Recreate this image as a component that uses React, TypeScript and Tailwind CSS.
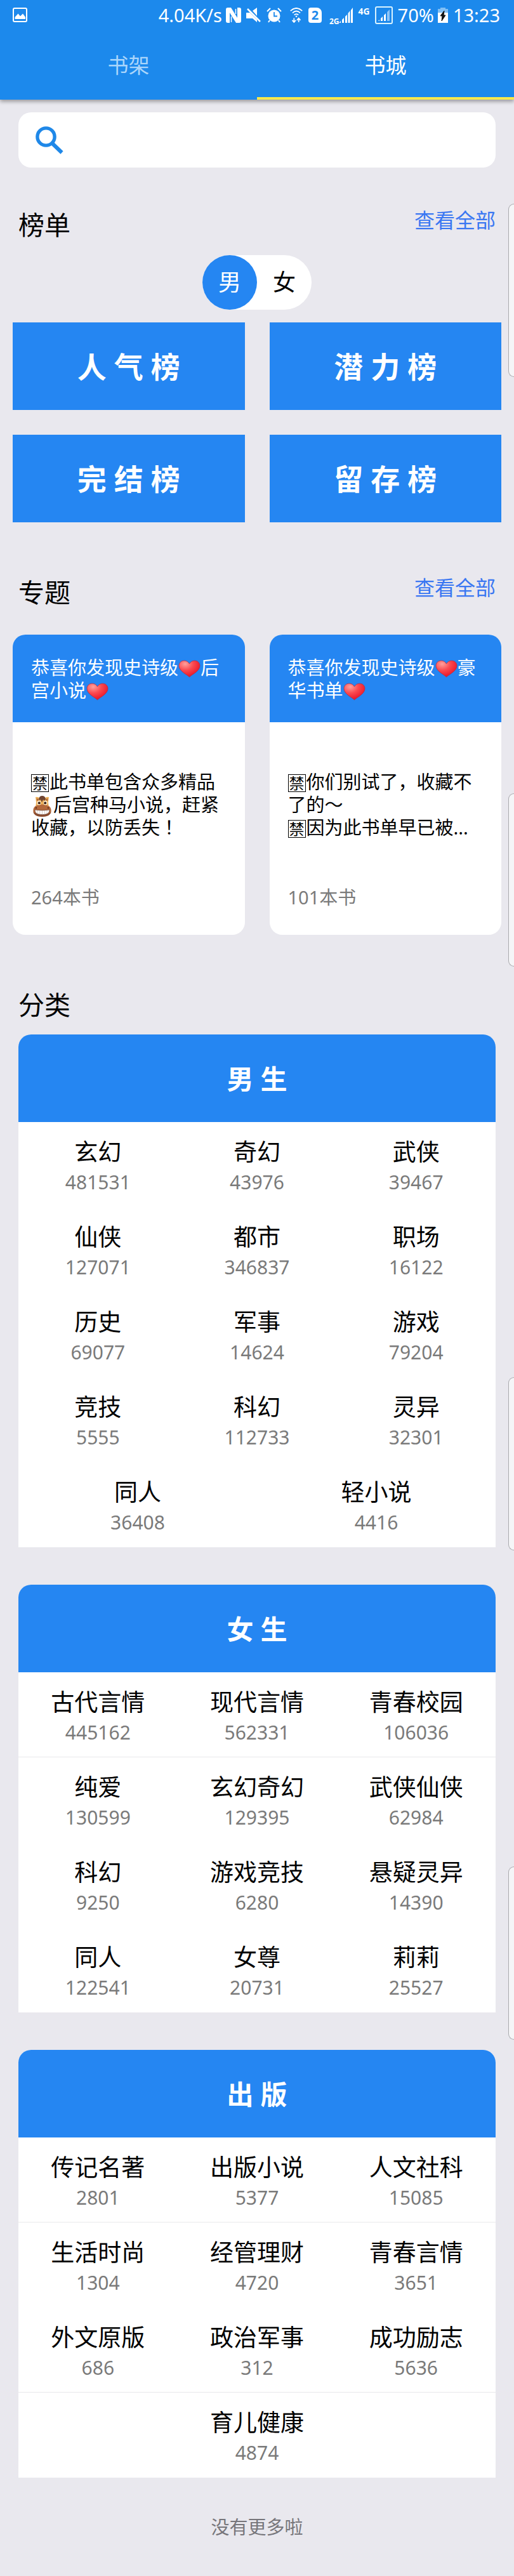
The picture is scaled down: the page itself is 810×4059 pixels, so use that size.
import React from "react";

type Category = { name: string; count: number };
type Group = { title: string; rows: Category[][]; ruled: number[] };

const rankings = ["人 气 榜", "潜 力 榜", "完 结 榜", "留 存 榜"];

const row = (...cells: [string, number][]): Category[] =>
  cells.map(([name, count]) => ({ name, count }));

const groups: Group[] = [
  {
    title: "男 生",
    ruled: [],
    rows: [
      row(["玄幻", 481531], ["奇幻", 43976], ["武侠", 39467]),
      row(["仙侠", 127071], ["都市", 346837], ["职场", 16122]),
      row(["历史", 69077], ["军事", 14624], ["游戏", 79204]),
      row(["竞技", 5555], ["科幻", 112733], ["灵异", 32301]),
      row(["同人", 36408], ["轻小说", 4416]),
    ],
  },
  {
    title: "女 生",
    ruled: [0],
    rows: [
      row(["古代言情", 445162], ["现代言情", 562331], ["青春校园", 106036]),
      row(["纯爱", 130599], ["玄幻奇幻", 129395], ["武侠仙侠", 62984]),
      row(["科幻", 9250], ["游戏竞技", 6280], ["悬疑灵异", 14390]),
      row(["同人", 122541], ["女尊", 20731], ["莉莉", 25527]),
    ],
  },
  {
    title: "出 版",
    ruled: [0, 2],
    rows: [
      row(["传记名著", 2801], ["出版小说", 5377], ["人文社科", 15085]),
      row(["生活时尚", 1304], ["经管理财", 4720], ["青春言情", 3651]),
      row(["外文原版", 686], ["政治军事", 312], ["成功励志", 5636]),
      row(["育儿健康", 4874]),
    ],
  },
];

function Heart() {
  return (
    <svg viewBox="0 0 35 28" className="inline-block h-7 w-[35px] align-[-5px]" aria-hidden="true">
      <defs>
        <radialGradient id="heart" cx="0.3" cy="0.2" r="0.85">
          <stop offset="0" stopColor="#ffa09c" />
          <stop offset="0.45" stopColor="#fb4a50" />
          <stop offset="1" stopColor="#e80d22" />
        </radialGradient>
      </defs>
      <path
        d="M17.500 27C15 23.500 1 18 1 9C1 4.500 4.500 1 9.300 1c3.700 0 6.700 2 8.200 5 1.500-3 4.500-5 8.200-5C30.500 1 34 4.500 34 9c0 9-14 14.500-16.500 18z"
        fill="url(#heart)"
        stroke="#a8324f"
        strokeWidth="0.8"
      />
    </svg>
  );
}

function Horse() {
  return (
    <svg viewBox="0 0 35 36" className="-my-2 inline-block h-9 w-[35px] align-[-2px]" aria-hidden="true">
      <path d="M8 11L7 3q5-1 7 3h7q2-4 7-3l-1 8 1 9H7z" fill="#eeb058" />
      <path d="M9 9L8.500 5q3 0 4 3zM26 9l.5-4q-3 0-4 3z" fill="#b06a38" />
      <path d="M12 6q1-5 5.500-5T23 6l-2 3-2-2-2 4-2-4-2 1z" fill="#6f4432" />
      <path d="M7 17q10.500-5 21 0c3 2 4 5 3.500 9-.7 5-6 7.500-14 7.500S4 31 3.500 26C3 22 4 19 7 17z" fill="#b4693c" />
      <path d="M3.500 26c.7 5 6 8 14 8s13.300-3 14-8c-4 5-24 5-28 0z" fill="#8a4c30" />
      <ellipse cx="12.500" cy="12" rx="3" ry="3.600" fill="#fff0d8" />
      <ellipse cx="22.500" cy="12" rx="3" ry="3.600" fill="#fff0d8" />
      <circle cx="12.800" cy="12.300" r="2" fill="#3b2418" />
      <circle cx="22.200" cy="12.300" r="2" fill="#3b2418" />
      <circle cx="8" cy="20" r="1.300" fill="#6a341f" />
      <circle cx="27" cy="20" r="1.300" fill="#6a341f" />
      <path d="M6 23q11.500 2 23 0c0 5-3 7.500-11.500 7.500S6 28 6 23z" fill="#fff" stroke="#63382a" strokeWidth="0.7" />
      <path d="M10 24v5M13.800 24v6M17.500 24.500v6M21.300 24v6M25 24v5" stroke="#c4b4aa" strokeWidth="0.7" />
    </svg>
  );
}

function Banned() {
  return (
    <span className="mr-px inline-flex h-7 w-7 items-center justify-center border border-black text-2xl leading-none">
      禁
    </span>
  );
}

/* Full-width exclamation mark centred in its cell. */
function Mark({ children }: { children: string }) {
  return (
    <span lang="ko" className="font-['Noto_Sans_CJK_KR',sans-serif] leading-none">
      {children}
    </span>
  );
}

function StatusBar() {
  return (
    <div className="flex h-12 items-center justify-between pr-[22px] pl-5">
      <svg viewBox="0 0 24 24" className="h-6 w-6" fill="none" aria-hidden="true">
        <rect x="1" y="1" width="21" height="21" rx="2" stroke="#fff" strokeWidth="2" />
        <path d="M3.500 18v-3l5-5.500 3.500 4 4-4 4 5.500v3z" fill="#fff" />
      </svg>
      <div className="flex items-center text-[29px] leading-10">
        <span>4.04K/s</span>
        <svg viewBox="0 0 24 24" className="ml-1.5 h-6 w-6" aria-hidden="true">
          <path d="M3 0H8L18 16V0h3q3 0 3 3v18q0 3-3 3h-5L6 8v16H3q-3 0-3-3V3q0-3 3-3z" fill="#fff" />
          <path d="M8.500 14v9M8.500 10l7 10.500M15.500 2v8" fill="none" stroke="#fff" strokeWidth="1.500" />
        </svg>
        <svg viewBox="0 0 24 24" className="ml-2 h-6 w-6" fill="#fff" aria-hidden="true">
          <path d="M0 8h6l11 11v4l-7-6H0zM10 5l7-5v13z" />
          <path d="M2 2l20 20" stroke="#fff" strokeWidth="2.500" />
        </svg>
        <svg viewBox="0 0 24 24" className="ml-2 h-6 w-6" fill="none" aria-hidden="true">
          <circle cx="12" cy="13" r="9.500" fill="#fff" />
          <path d="M1 6l5-5M23 6l-5-5M5 20l-2 3M19 20l2 3" stroke="#fff" strokeWidth="2" />
          <path d="M12 7v6.500h5" stroke="#1c89ec" strokeWidth="1.800" />
        </svg>
        <svg viewBox="0 0 22 26" className="ml-3 h-6 w-[22px]" fill="none" stroke="#fff" aria-hidden="true">
          <path d="M1 5.500q10-9 20 0M4.500 9q6.500-6 13 0M7.500 12.500q3.500-3 7 0" strokeWidth="2" />
          <circle cx="11" cy="15" r="1" fill="#fff" />
          <path d="M7 18v6M4 21.500l3 3.500 3-3.500M15 25v-6M12 21.500l3-3.500 3 3.500" strokeWidth="1.800" />
        </svg>
        <span className="ml-2 flex h-6 w-[21px] items-center justify-center rounded-sm rounded-tr-lg bg-white text-xl font-bold text-[#1c89ec]">
          2
        </span>
        <span className="ml-3 self-end text-xs leading-5 font-bold">2G</span>
        <svg viewBox="0 0 22 24" className="h-6 w-[22px]" fill="#fff" aria-hidden="true">
          <path d="M0 24l3-3v3zM5 24v-5l3-3v8zM10 24V14l3-3v13zM14.500 24V9l3-4v19zM19 24V4l3-4v24z" />
        </svg>
        <span className="ml-2 self-start text-sm leading-7 font-bold">4G</span>
        <svg viewBox="0 0 28 28" className="ml-2 h-7 w-7" fill="#fff" aria-hidden="true">
          <rect x="1" y="1" width="26" height="26" rx="2" fill="none" stroke="#d8f3ff" strokeWidth="2" />
          <path d="M5 23l2-2v2zM9 23v-4l3-3v7zM14 23v-9l3-3v12z" />
          <path d="M19 23V9l4-4v18z" opacity="0.5" />
        </svg>
        <span className="ml-2">70%</span>
        <svg viewBox="0 0 16 24" className="ml-1.5 h-6 w-4" aria-hidden="true">
          <path d="M4 0h8v2h4v6H0V2h4z" fill="#80bff5" />
          <rect y="8" width="16" height="16" fill="#fff" />
          <path d="M10 5l-6 8h3l-1 8 6-9H9z" fill="#111" stroke="#111" />
        </svg>
        <span className="ml-2">13:23</span>
      </div>
    </div>
  );
}

function SectionTitle({ title, more }: { title: string; more?: boolean }) {
  return (
    <div className="flex items-start justify-between px-[29px]">
      <h2 className="text-[41px] leading-[60px]">{title}</h2>
      {more && (
        <a href="#" className="text-[32px] leading-[46px] text-[#3a77f2]">
          查看全部
        </a>
      )}
    </div>
  );
}

function Topic({ title, children, count }: { title: React.ReactNode; children: React.ReactNode; count: number }) {
  return (
    <article className="overflow-hidden rounded-[20px] bg-white text-[29px] leading-9">
      <h3 className="h-[138px] bg-[#2586f2] pt-[34px] pl-[29px] text-white">{title}</h3>
      <p className="h-[242px] pt-[76px] pl-[29px]">{children}</p>
      <p className="h-[93px] pt-4 pl-[29px] text-[#7a7a7a]">{count}本书</p>
    </article>
  );
}

function GroupCard({ group }: { group: Group }) {
  return (
    <section className="overflow-hidden rounded-t-[20px] bg-white">
      <h3 className="flex h-[138px] items-center justify-center bg-[#2586f2] text-[42px] font-bold text-white">
        {group.title}
      </h3>
      {group.rows.map((cells, i) => (
        <div
          key={i}
          className={`flex h-[134px] border-b ${group.ruled.includes(i) ? "border-[#e9e9eb]" : "border-white"}`}
        >
          {cells.map((c) => (
            <a key={c.name} href="#" className="flex flex-1 flex-col items-center pt-[22px]">
              <span className="text-[37px] leading-[50px]">{c.name}</span>
              <span className="text-3xl leading-[46px] text-[#7a7a7a]">{c.count}</span>
            </a>
          ))}
        </div>
      ))}
    </section>
  );
}

function EdgeTab({ place }: { place: string }) {
  return (
    <div
      aria-hidden="true"
      className={`absolute right-0 h-[273px] w-[9px] rounded-l-xl border border-r-0 border-[#a9a9ad] bg-[#f5f5f7] ${place}`}
    />
  );
}

export default function App() {
  return (
    <div className="relative bg-[#e9e8ee] pb-14 font-['Noto_Sans','Noto_Sans_CJK_SC',sans-serif] text-black" lang="zh-CN">
      <header className="relative bg-[#1c89ec] text-white shadow-[0_3px_6px_rgba(0,0,0,0.35)]">
        <StatusBar />
        <nav className="grid grid-cols-2 text-[33px]">
          <a href="#" className="flex h-[109px] items-center justify-center text-[#a9d5fb]">
            书架
          </a>
          <a href="#" className="flex h-[109px] items-center justify-center border-y-4 border-t-transparent border-b-[#f6e94d]">
            书城
          </a>
        </nav>
      </header>

      <main>
        <label className="mx-[29px] mt-5 flex h-[87px] items-center rounded-[20px] bg-white pl-[27px]">
          <svg viewBox="0 0 44 44" className="h-11 w-11" fill="none" stroke="#1f88e8" aria-hidden="true">
            <circle cx="16.500" cy="16.500" r="13.600" strokeWidth="5.400" />
            <path d="M27 27.500l14.500 14" strokeWidth="6" />
          </svg>
          <input type="search" aria-label="搜索" className="h-full flex-1 bg-transparent px-4 text-[32px] outline-none" />
        </label>

        <section className="pt-[60px]">
          <SectionTitle title="榜单" more />
          <div className="mt-[18px] flex justify-center">
            <div className="flex rounded-full bg-white text-4xl">
              <button className="h-[86px] w-[86px] rounded-full bg-[#2586f2] text-white">男</button>
              <button className="h-[86px] w-[86px] rounded-full">女</button>
            </div>
          </div>
          <div className="mt-5 grid grid-cols-2 gap-[39px] px-5">
            {rankings.map((r) => (
              <button key={r} className="h-[138px] bg-[#2586f2] text-[46px] font-bold text-white">
                {r}
              </button>
            ))}
          </div>
        </section>

        <section className="pt-20">
          <SectionTitle title="专题" more />
          <div className="mt-[37px] grid grid-cols-2 gap-[39px] px-5">
            <Topic
              count={264}
              title={
                <>
                  恭喜你发现史诗级
                  <Heart />后
                  <br />
                  宫小说
                  <Heart />
                </>
              }
            >
              <Banned />
              此书单包含众多精品
              <br />
              <Horse />
              后宫种马小说，赶紧
              <br />
              收藏，以防丢失<Mark>！</Mark>
            </Topic>
            <Topic
              count={101}
              title={
                <>
                  恭喜你发现史诗级
                  <Heart />豪
                  <br />
                  华书单
                  <Heart />
                </>
              }
            >
              <Banned />
              你们别试了，收藏不
              <br />
              了的～
              <br />
              <Banned />
              因为此书单早已被...
            </Topic>
          </div>
        </section>

        <section className="pt-20">
          <SectionTitle title="分类" />
          <div className="mt-[17px] flex flex-col gap-[59px] px-[29px]">
            {groups.map((g) => (
              <GroupCard key={g.title} group={g} />
            ))}
          </div>
        </section>

        <p className="pt-[55px] text-center text-[29px] leading-[46px] text-[#77767b]">没有更多啦</p>
      </main>

      <EdgeTab place="top-[321px]" />
      <EdgeTab place="top-[1250px]" />
      <EdgeTab place="top-[2170px]" />
      <EdgeTab place="top-[2941px]" />
    </div>
  );
}
